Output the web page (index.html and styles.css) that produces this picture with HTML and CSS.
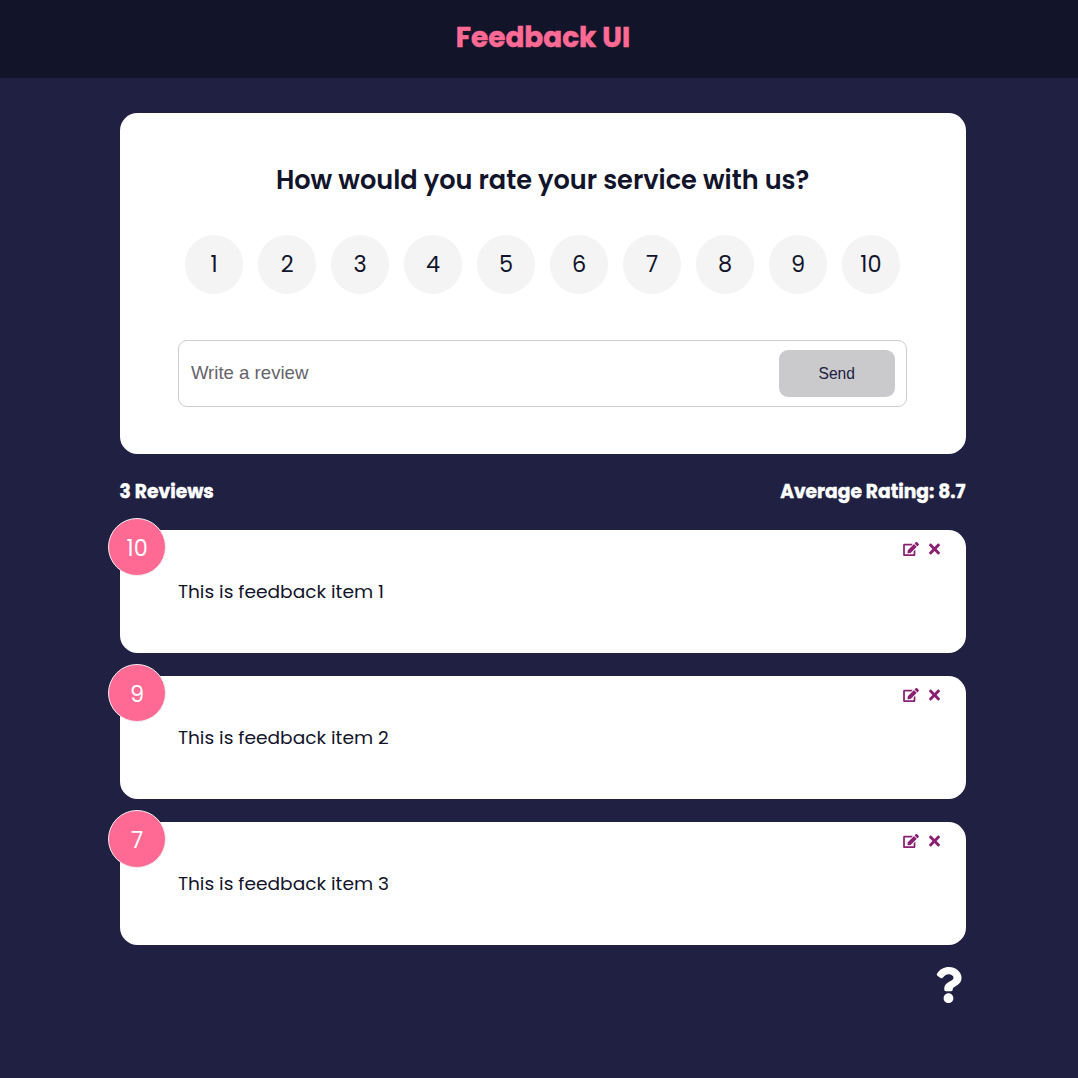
FILE: index.html
```html
<!DOCTYPE html>
<html lang="en">
<head>
<meta charset="utf-8">
<title>Feedback UI</title>
<link rel="stylesheet" href="styles.css">
</head>
<body>
<svg class="sprite" aria-hidden="true">
  <symbol id="edit" viewBox="0 0 576 512"><path d="M402.6 83.2l90.2 90.2c3.8 3.8 3.8 10 0 13.8L274.4 405.6l-92.8 10.3c-12.4 1.4-22.9-9.1-21.5-21.5l10.3-92.8L388.8 83.2c3.8-3.8 10-3.8 13.8 0zm162-22.9l-48.8-48.8c-15.2-15.2-39.9-15.2-55.2 0l-35.4 35.4c-3.8 3.8-3.8 10 0 13.8l90.2 90.2c3.8 3.8 10 3.8 13.8 0l35.4-35.4c15.2-15.3 15.2-40 0-55.2zM384 346.2V448H64V128h229.8c3.2 0 6.2-1.3 8.5-3.5l40-40c7.6-7.6 2.2-20.5-8.5-20.5H48C21.5 64 0 85.5 0 112v352c0 26.5 21.5 48 48 48h352c26.5 0 48-21.5 48-48V306.2c0-10.7-12.9-16-20.5-8.5l-40 40c-2.2 2.3-3.5 5.3-3.5 8.5z"/></symbol>
  <symbol id="times" viewBox="0 0 352 512"><path d="M242.72 256l100.07-100.07c12.28-12.28 12.28-32.19 0-44.48l-22.24-22.24c-12.28-12.28-32.19-12.28-44.48 0L176 189.28 75.93 89.21c-12.28-12.28-32.19-12.28-44.48 0L9.21 111.45c-12.28 12.28-12.28 32.19 0 44.48L109.28 256 9.21 356.07c-12.28 12.28-12.28 32.19 0 44.48l22.24 22.24c12.28 12.28 32.2 12.28 44.48 0L176 322.72l100.07 100.07c12.28 12.28 32.2 12.28 44.48 0l22.24-22.24c12.28-12.28 12.28-32.19 0-44.48L242.72 256z"/></symbol>
</svg>
<header class="header"><h1 class="brand">Feedback UI</h1></header>
<main class="container">
  <section class="card form-card">
    <h2 class="question">How would you rate your service with us?</h2>
    <ul class="rating">
      <li>1</li><li>2</li><li>3</li><li>4</li><li>5</li><li>6</li><li>7</li><li>8</li><li>9</li><li>10</li>
    </ul>
    <div class="input-group">
      <input class="review" type="text" placeholder="Write a review">
      <button class="send" type="button">Send</button>
    </div>
  </section>
  <div class="stats"><h4 class="count">3 Reviews</h4><h4 class="average">Average Rating: 8.7</h4></div>
  <article class="card item">
    <div class="score">10</div>
    <div class="actions"><svg class="edit"><use href="#edit"/></svg><svg class="close"><use href="#times"/></svg></div>
    <p class="text">This is feedback item 1</p>
  </article>
  <article class="card item">
    <div class="score">9</div>
    <div class="actions"><svg class="edit"><use href="#edit"/></svg><svg class="close"><use href="#times"/></svg></div>
    <p class="text">This is feedback item 2</p>
  </article>
  <article class="card item">
    <div class="score">7</div>
    <div class="actions"><svg class="edit"><use href="#edit"/></svg><svg class="close"><use href="#times"/></svg></div>
    <p class="text">This is feedback item 3</p>
  </article>
  <footer class="about">
    <svg class="help" viewBox="0 0 384 512"><path d="M202.021 0C122.202 0 70.503 32.703 29.914 91.026c-7.363 10.58-5.093 25.086 5.178 32.874l43.138 32.709c10.373 7.865 25.132 6.026 33.253-4.148 25.049-31.381 43.63-49.449 82.757-49.449 30.764 0 68.816 19.799 68.816 49.631 0 22.552-18.617 34.134-48.993 51.164-35.423 19.86-82.299 44.576-82.299 106.405V320c0 13.255 10.745 24 24 24h72.471c13.255 0 24-10.745 24-24v-5.773c0-42.86 125.268-44.645 125.268-160.627C377.504 66.256 286.902 0 202.021 0zM192 373.459c-38.196 0-69.271 31.075-69.271 69.271 0 38.195 31.075 69.27 69.271 69.27s69.271-31.075 69.271-69.271-31.075-69.27-69.271-69.27z"/></svg>
  </footer>
</main>
</body>
</html>
```
FILE: styles.css
```css
* { box-sizing: border-box; margin: 0; padding: 0; }

body {
  min-height: 100vh;
  background: #202142;
  color: #11142a;
  font-family: Poppins, Inter, sans-serif;
}

.sprite { display: none; }

.header {
  height: 78px;
  padding: 17px 0 0 8px;
  background: #121429;
  color: #ff6a95;
  text-align: center;
}

.brand {
  font-size: 27.9px;
  font-weight: 700;
  line-height: 41px;
  -webkit-text-stroke: 0.5px currentColor;
}

.container { width: 846px; margin: 35px 0 0 119.6px; }

.card { background: #fff; border-radius: 17.5px; }

.form-card { height: 340.6px; padding: 47px 58.3px 0; }

.question {
  font-size: 25.6px;
  font-weight: 600;
  line-height: 40px;
  text-align: center;
  white-space: nowrap;
}

.rating {
  display: flex;
  justify-content: space-between;
  margin-top: 35px;
  padding: 0 7px;
  list-style: none;
}

.rating li {
  width: 58.6px;
  height: 58.6px;
  border-radius: 50%;
  background: #f4f4f4;
  font-size: 22.4px;
  line-height: 59px;
  text-align: center;
}

.input-group {
  display: flex;
  align-items: center;
  height: 67px;
  margin-top: 46px;
  padding: 0 11.6px 0 12px;
  border: 1px solid #ccc;
  border-radius: 9px;
}

.review {
  flex: 1;
  min-width: 0;
  border: 0;
  outline: 0;
  font: 18.6px "Liberation Sans", Arial, sans-serif;
}

.review::placeholder { color: #65646c; }

.send {
  width: 116px;
  height: 47px;
  padding-top: 1px;
  border: 0;
  border-radius: 9px;
  background: #cac9cc;
  color: #202142;
  font: 15.6px "Liberation Sans", Arial, sans-serif;
}

.stats {
  display: flex;
  justify-content: space-between;
  height: 76.4px;
  padding-top: 23.4px;
  color: #fff;
  font-size: 18.67px;
  line-height: 30px;
}

.count, .average {
  font-weight: 700;
  white-space: nowrap;
  -webkit-text-stroke: 0.4px currentColor;
}

.item { position: relative; height: 122.8px; margin-bottom: 23.1px; padding: 47px 58.3px 0; }

.score {
  position: absolute;
  top: -12px;
  left: -12px;
  width: 58px;
  height: 58px;
  padding-left: 1px;
  border: 1px solid #eee;
  border-radius: 50%;
  background: #ff6a95;
  color: #fff;
  font-size: 22.4px;
  line-height: 59px;
  text-align: center;
}

.actions {
  position: absolute;
  top: 11.4px;
  right: 25.7px;
  display: flex;
  align-items: center;
  gap: 10px;
  fill: #8b2072;
}

.edit { width: 16px; height: 14px; }
.close { width: 11px; height: 16px; }

.text { font-size: 18.6px; line-height: 29px; white-space: nowrap; }

.about { display: flex; justify-content: flex-end; padding-right: 4px; }

.help { width: 27px; height: 36px; margin-top: -1px; fill: #fff; }
```
